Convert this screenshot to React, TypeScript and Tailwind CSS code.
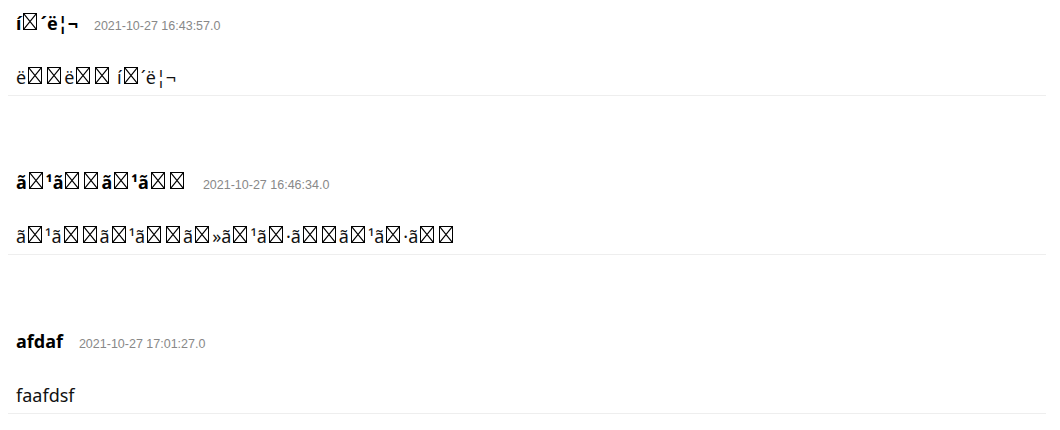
import React from 'react';

// "□" marks a byte the font has no glyph for; it is drawn as a crossed box
const POSTS = [
    {
        title: 'í□´ë¦¬',
        date: '2021-10-27 16:43:57.0',
        body: 'ë□□ë□□ í□´ë¦¬',
    },
    {
        title: 'ã□¹ã□□ã□¹ã□□',
        date: '2021-10-27 16:46:34.0',
        body: 'ã□¹ã□□ã□¹ã□□ã□»ã□¹ã□·ã□□ã□¹ã□·ã□□',
    },
    {
        title: 'afdaf',
        date: '2021-10-27 17:01:27.0',
        body: 'faafdsf',
    },
];

const MissingGlyph: React.FC = () => (
    <span className="inline-block w-[14px] h-[17px] ml-[2px] mr-[3px] border border-black">
        <svg width="12" height="15" viewBox="0 0 12 15" className="block">
            <path d="M0 0 L12 15 M12 0 L0 15" stroke="#000" strokeWidth="1.1" fill="none" />
        </svg>
    </span>
);

const Garbled: React.FC<{ text: string }> = ({ text }) => (
    <>
        {text.split('').map((ch, i) =>
            ch === '□' ? <MissingGlyph key={i} /> : <React.Fragment key={i}>{ch}</React.Fragment>
        )}
    </>
);

export default function App() {
    return (
        <div className="bg-white min-h-[430px] font-['Noto_Sans',sans-serif] text-[#111]">
            {POSTS.map((post, idx) => (
                <div key={idx} className="ml-2 mr-[14px] border-b border-[#eee] pt-[10px] pb-[5px] mb-[63px]">
                    <div className="flex items-baseline px-2 h-[26px] leading-[26px]">
                        <span className="text-[18px] font-bold text-black">
                            <Garbled text={post.title} />
                        </span>
                        <span className="ml-4 text-[12.5px] text-[#888] font-['Liberation_Sans',sans-serif]">
                            {post.date}
                        </span>
                    </div>
                    <div className="px-2 mt-[28px] text-[18px] leading-[26px]">
                        <Garbled text={post.body} />
                    </div>
                </div>
            ))}
        </div>
    );
}
